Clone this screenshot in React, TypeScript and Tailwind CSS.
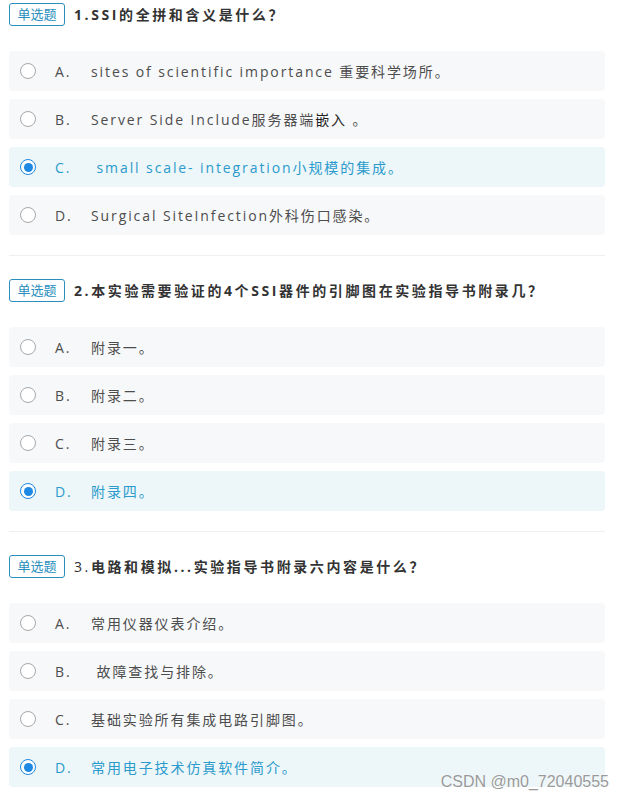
import React from "react";

type Option = { key: string; text: React.ReactNode };
type Question = { title: React.ReactNode; options: Option[]; answer: string };

const questions: Question[] = [
  {
    title: <>1.SSI的全拼和含义是什么？</>,
    answer: "C",
    options: [
      { key: "A", text: "sites of scientific importance 重要科学场所。" },
      {
        key: "B",
        text: (
          <>
            Server Side Include服务器端<span className="text-[#222]">嵌入</span> 。
          </>
        ),
      },
      { key: "C", text: " small scale- integration小规模的集成。" },
      { key: "D", text: "Surgical SiteInfection外科伤口感染。" },
    ],
  },
  {
    title: <>2.本实验需要验证的4个SSI器件的引脚图在实验指导书附录几？</>,
    answer: "D",
    options: [
      { key: "A", text: "附录一。" },
      { key: "B", text: "附录二。" },
      { key: "C", text: "附录三。" },
      { key: "D", text: "附录四。" },
    ],
  },
  {
    title: (
      <>
        <span className="font-normal">3.</span>电路和模拟...实验指导书附录六内容是什么？
      </>
    ),
    answer: "D",
    options: [
      { key: "A", text: "常用仪器仪表介绍。" },
      { key: "B", text: " 故障查找与排除。" },
      { key: "C", text: "基础实验所有集成电路引脚图。" },
      { key: "D", text: "常用电子技术仿真软件简介。" },
    ],
  },
];

function Radio({ checked }: { checked: boolean }) {
  if (checked) {
    return (
      <span className="flex h-4 w-4 shrink-0 items-center justify-center rounded-full border-[1.5px] border-[#1e88e5] bg-white">
        <span className="h-[9px] w-[9px] rounded-full bg-[#1e88e5]" />
      </span>
    );
  }
  return <span className="h-4 w-4 shrink-0 rounded-full border border-[#a8a8a8] bg-white" />;
}

function QuestionBlock({ q, first }: { q: Question; first: boolean }) {
  return (
    <div className={first ? "pt-[3px]" : "pt-[23px]"}>
      <div className="flex h-[23px] items-center">
        <span className="flex h-[23px] w-[56px] shrink-0 items-center justify-center rounded-[3px] border border-[#2a8fbd] text-[13px] leading-none text-[#2a8fbd]">
          单选题
        </span>
        <h2 className="ml-[9px] whitespace-nowrap text-[14px] font-bold leading-none tracking-[2.6px] text-[#333]">
          {q.title}
        </h2>
      </div>
      <div className="mt-[25px] flex flex-col gap-2">
        {q.options.map((o) => {
          const sel = o.key === q.answer;
          return (
            <div
              key={o.key}
              className={
                "flex h-10 items-center rounded-[4px] pl-[11px] text-[14px] tracking-[1.9px] " +
                (sel ? "bg-[#edf6f9] text-[#2a9bcc]" : "bg-[#f7f8fa] text-[#4d4d4d]")
              }
            >
              <Radio checked={sel} />
              <span className="ml-[19px] w-[36px]">{o.key}.</span>
              <span className="whitespace-pre">{o.text}</span>
            </div>
          );
        })}
      </div>
    </div>
  );
}

export default function App() {
  return (
    <div
      className="relative h-[800px] w-[624px] bg-white"
      style={{ fontFamily: '"Open Sans", "Noto Sans CJK SC", sans-serif' }}
    >
      <div className="ml-[9px] w-[596px]">
        {questions.map((q, i) => (
          <div key={i}>
            <QuestionBlock q={q} first={i === 0} />
            {i < questions.length - 1 && <div className="mt-[20px] h-px bg-[#efefef]" />}
          </div>
        ))}
      </div>
      <div className="absolute right-[15px] top-[770px] font-['Liberation_Sans',sans-serif] text-[16px] text-[#9a9a9a] [text-shadow:0_0_2px_#fff]">
        CSDN @m0_72040555
      </div>
    </div>
  );
}
